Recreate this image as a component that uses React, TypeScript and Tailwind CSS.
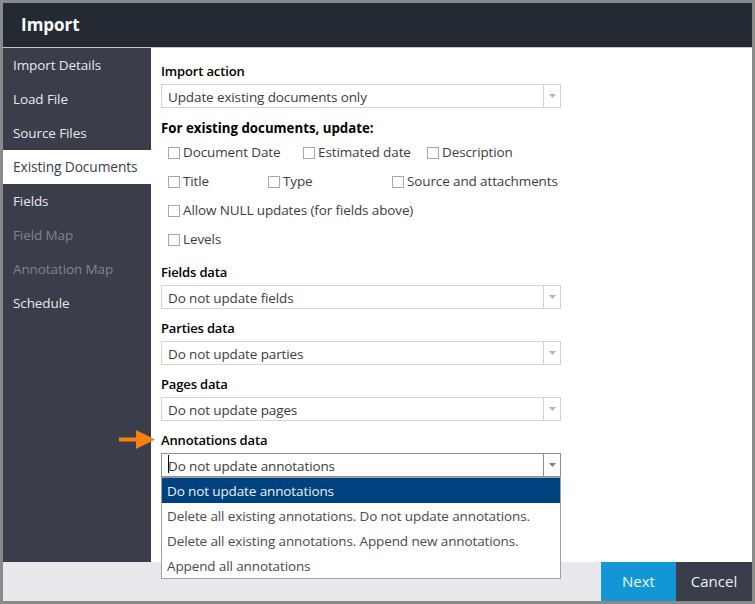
const nav: [string, string][] = [
  ["Import Details", "text-[13.5px] text-[#e6e7ea] bg-[#3a3e4b]"],
  ["Load File", "text-[13.5px] text-[#e6e7ea] bg-[#3a3e4b]"],
  ["Source Files", "text-[13.5px] text-[#e6e7ea] bg-[#3a3e4b]"],
  ["Existing Documents", "text-[13.75px] text-[#3a3e4b] bg-white"],
  ["Fields", "text-[13.5px] text-[#e6e7ea] bg-[#3a3e4b]"],
  ["Field Map", "text-[13.5px] text-[#80838d] bg-[#3a3e4b]"],
  ["Annotation Map", "text-[13.5px] text-[#80838d] bg-[#3a3e4b]"],
  ["Schedule", "text-[13.5px] text-[#e6e7ea] bg-[#3a3e4b]"],
];

const font = { fontFamily: '"Open Sans", "Noto Sans", sans-serif' };

function Caret({ color }: { color: string }) {
  return (
    <svg width="7" height="4" viewBox="0 0 7 4" aria-hidden="true">
      <path d="M0 0H7L3.5 4Z" fill={color} />
    </svg>
  );
}

function Select({ value, focused }: { value: string; focused?: boolean }) {
  return (
    <div
      className={`flex h-6 w-[400px] items-center border bg-white text-[13.5px] tracking-[-0.12px] text-[#3d3d3d] ${
        focused ? "border-[#8f8f8f]" : "border-[#d4d4d4]"
      }`}
    >
      <div className="relative flex-1 truncate pl-[6px] pt-[2px]">
        {focused && <span className="absolute left-[6px] top-[1px] h-[18px] w-px bg-black" />}
        {value}
      </div>
      <div
        className={`flex h-full w-[17px] items-center justify-center border-l ${
          focused ? "border-[#8f8f8f]" : "border-[#d4d4d4]"
        }`}
      >
        <Caret color={focused ? "#808080" : "#b4b4b4"} />
      </div>
    </div>
  );
}

function Check({ label, width }: { label: string; width?: string }) {
  return (
    <div className={`flex items-center gap-[3px] ${width ?? ""}`}>
      <span className="h-3 w-3 border border-[#a8a8a8] bg-white" />
      <span className="whitespace-nowrap text-[13.5px] tracking-[-0.12px] text-[#3d3d3d]">{label}</span>
    </div>
  );
}

function Label({ children, heavy }: { children: string; heavy?: boolean }) {
  return (
    <div
      className={`h-5 leading-5 text-black ${
        heavy ? "text-[13.25px] font-bold" : "text-[13px] font-semibold tracking-[-0.15px]"
      }`}
    >
      {children}
    </div>
  );
}

function Field({ label, value }: { label: string; value: string }) {
  return (
    <div className="mb-[9px]">
      <div className="mb-[3px]">
        <Label>{label}</Label>
      </div>
      <Select value={value} />
    </div>
  );
}

const option = "flex h-[25px] items-center whitespace-nowrap pl-[5px] pt-[2px]";

export default function App() {
  return (
    <div
      className="flex h-[604px] w-[755px] flex-col overflow-hidden border-[3px] border-[#8a8a8a] bg-white"
      style={font}
    >
      <header className="flex h-[44px] shrink-0 items-center bg-[#232a34] pl-[18px] text-[17px] font-bold text-white">
        Import
      </header>
      <div className="h-px shrink-0 bg-[#c8c8c8]" />
      <div className="flex min-h-0 flex-1">
        <nav className="w-[148px] shrink-0 bg-[#3a3e4b]">
          {nav.map(([name, cls]) => (
            <div
              key={name}
              className={`flex h-[34px] items-center whitespace-nowrap pl-[10px] tracking-[-0.1px] ${cls}`}
            >
              {name}
            </div>
          ))}
        </nav>
        <main className="relative flex-1 pl-[10px] pt-[13px]">
          <div className="mb-[3px]">
            <Label>Import action</Label>
          </div>
          <Select value="Update existing documents only" />
          <div className="mt-[10px]">
            <Label heavy>For existing documents, update:</Label>
          </div>
          <div className="pl-[7px]">
            <div className="flex h-[29px] items-center">
              <Check label="Document Date" width="w-[135px]" />
              <Check label="Estimated date" width="w-[124px]" />
              <Check label="Description" />
            </div>
            <div className="flex h-[29px] items-center">
              <Check label="Title" width="w-[100px]" />
              <Check label="Type" width="w-[124px]" />
              <Check label="Source and attachments" />
            </div>
            <div className="flex h-[29px] items-center">
              <Check label="Allow NULL updates (for fields above)" />
            </div>
            <div className="flex h-[29px] items-center">
              <Check label="Levels" />
            </div>
          </div>
          <div className="mt-2">
            <Field label="Fields data" value="Do not update fields" />
            <Field label="Parties data" value="Do not update parties" />
            <Field label="Pages data" value="Do not update pages" />
            <div className="relative mb-[3px]">
              <Label>Annotations data</Label>
              <svg
                className="absolute -left-[43px] top-0"
                width="38"
                height="20"
                viewBox="0 0 38 20"
                aria-hidden="true"
              >
                <path d="M1 7.5H18V0L37 9.5L18 19V11.5H1Z" fill="#f97f0f" />
              </svg>
            </div>
            <div className="relative w-[400px]">
              <Select value="Do not update annotations" focused />
              <div className="absolute left-0 top-6 z-10 w-[400px] border border-[#a0a0a0] bg-white text-[13.5px] tracking-[-0.12px] text-[#4a4a4a]">
                <div className={`${option} bg-[#00427f] text-[#e8f0f8]`}>Do not update annotations</div>
                <div className={option}>Delete all existing annotations. Do not update annotations.</div>
                <div className={option}>Delete all existing annotations. Append new annotations.</div>
                <div className={option}>Append all annotations</div>
              </div>
            </div>
          </div>
        </main>
      </div>
      <footer className="flex h-[39px] shrink-0 justify-end bg-[#e8e9ed]">
        <button className="h-full w-[75px] bg-[#1296d6] text-[15px] text-[#eef8fd]">Next</button>
        <button className="h-full w-[76px] bg-[#3a3e4b] text-[15px] text-[#eef0f2]">Cancel</button>
      </footer>
    </div>
  );
}
